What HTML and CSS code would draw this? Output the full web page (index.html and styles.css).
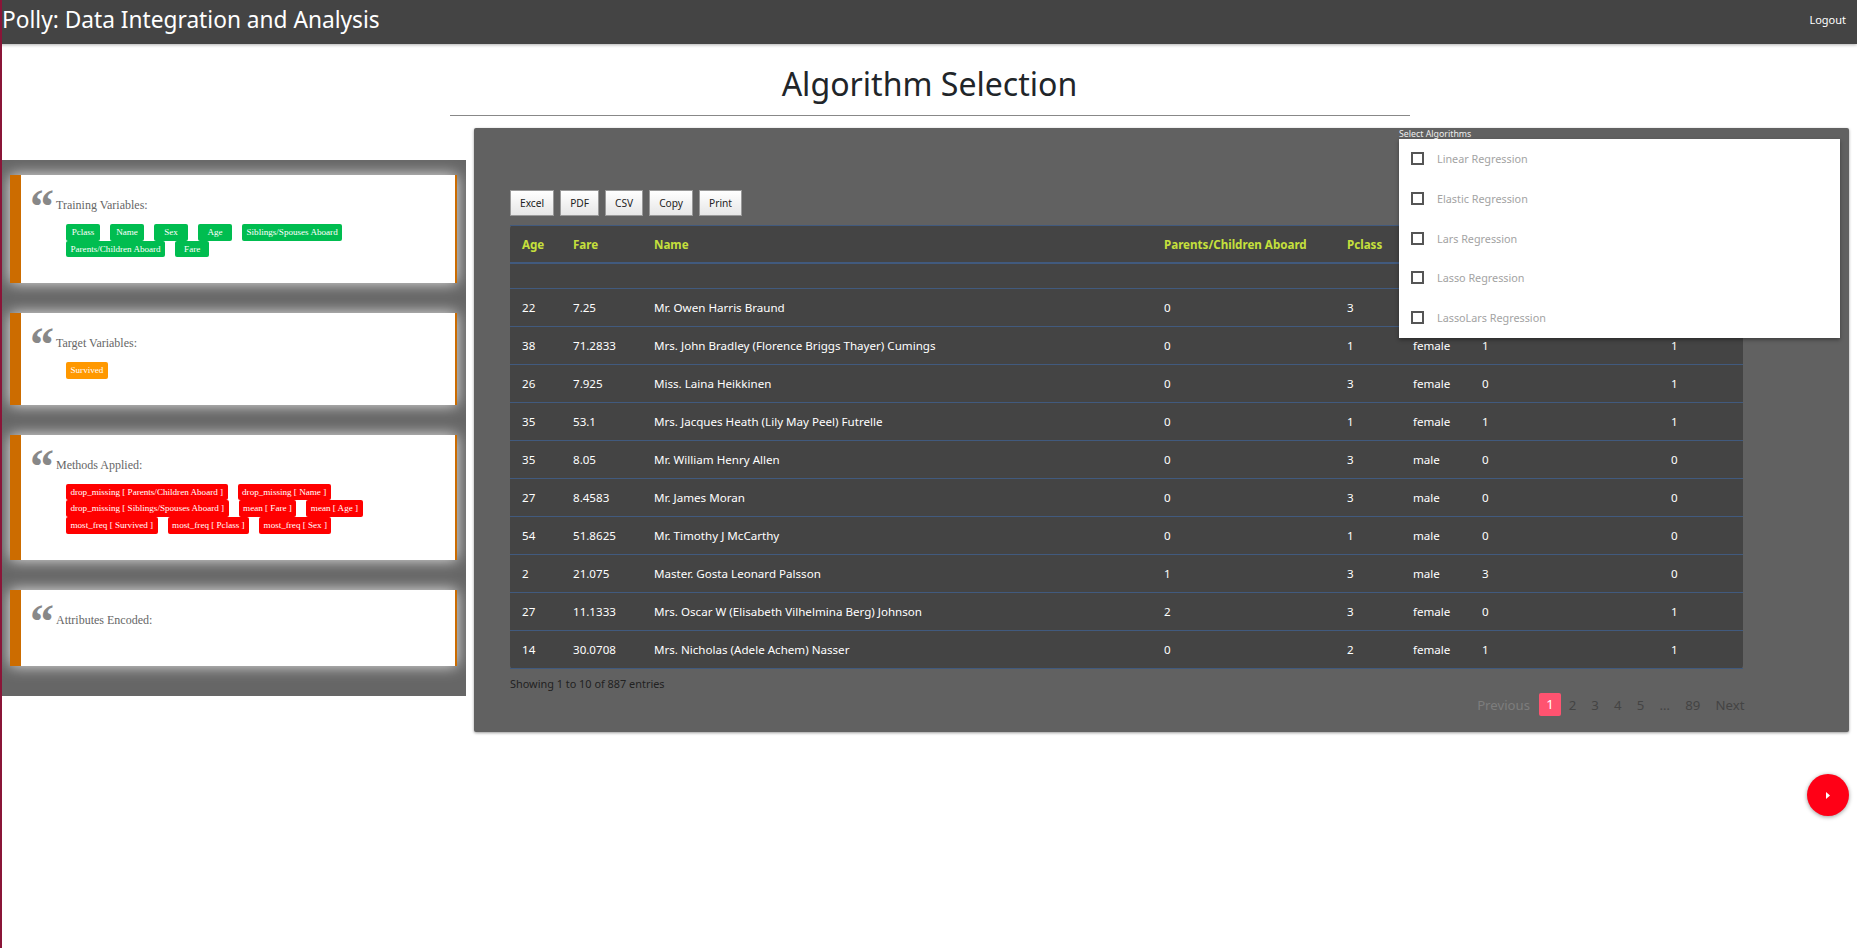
FILE: index.html
```html
<!DOCTYPE html>
<html>
<head>
    <meta charset="UTF-8">
    <title>Polly: Data Integration and Analysis</title>
    <link rel="stylesheet" href="styles.css">
</head>
<body>
    <header class="topbar">
        <span class="brand">Polly: Data Integration and Analysis</span>
        <a class="logout">Logout</a>
    </header>

    <div class="page-head">
        <h1>Algorithm Selection</h1>
        <div class="rule"></div>
    </div>

    <div class="main">
        <aside class="summary">
            <div class="card card-one">
                <div class="card-title"><span class="quote">“</span>Training Variables:</div>
                <div class="tags">
                    <span class="tag green">Pclass</span>
                    <span class="tag green">Name</span>
                    <span class="tag green">Sex</span>
                    <span class="tag green">Age</span>
                    <span class="tag green">Siblings/Spouses Aboard</span>
                    <span class="tag green">Parents/Children Aboard</span>
                    <span class="tag green">Fare</span>
                </div>
            </div>
            <div class="card">
                <div class="card-title"><span class="quote">“</span>Target Variables:</div>
                <div class="tags">
                    <span class="tag orange">Survived</span>
                </div>
            </div>
            <div class="card">
                <div class="card-title"><span class="quote">“</span>Methods Applied:</div>
                <div class="tags">
                    <span class="tag red">drop_missing [ Parents/Children Aboard ]</span>
                    <span class="tag red">drop_missing [ Name ]</span>
                    <span class="tag red">drop_missing [ Siblings/Spouses Aboard ]</span>
                    <span class="tag red">mean [ Fare ]</span>
                    <span class="tag red">mean [ Age ]</span>
                    <span class="tag red">most_freq [ Survived ]</span>
                    <span class="tag red">most_freq [ Pclass ]</span>
                    <span class="tag red">most_freq [ Sex ]</span>
                </div>
            </div>
            <div class="card">
                <div class="card-title"><span class="quote">“</span>Attributes Encoded:</div>
                <div class="tags"></div>
            </div>
        </aside>

        <div class="column">
            <section class="panel">
                <div class="algo-select">
                    <div class="algo-label">Select Algorithms</div>
                    <ul class="algo-list">
                        <li><span class="check"></span>Linear Regression</li>
                        <li><span class="check"></span>Elastic Regression</li>
                        <li><span class="check"></span>Lars Regression</li>
                        <li><span class="check"></span>Lasso Regression</li>
                        <li><span class="check"></span>LassoLars Regression</li>
                    </ul>
                </div>

                <div class="export-btns">
                    <button>Excel</button>
                    <button>PDF</button>
                    <button>CSV</button>
                    <button>Copy</button>
                    <button>Print</button>
                </div>

                <table class="data">
                    <colgroup>
                        <col class="c-age"><col class="c-fare"><col class="c-name"><col class="c-parents">
                        <col class="c-pclass"><col class="c-sex"><col class="c-sib"><col class="c-surv">
                    </colgroup>
                    <thead>
                        <tr>
                            <th>Age</th><th>Fare</th><th>Name</th><th>Parents/Children Aboard</th>
                            <th>Pclass</th><th></th><th></th><th></th>
                        </tr>
                    </thead>
                    <tbody>
                        <tr class="blank"><td colspan="8"></td></tr>
                        <tr><td>22</td><td>7.25</td><td>Mr. Owen Harris Braund</td><td>0</td><td>3</td><td></td><td></td><td></td></tr>
                        <tr><td>38</td><td>71.2833</td><td>Mrs. John Bradley (Florence Briggs Thayer) Cumings</td><td>0</td><td>1</td><td>female</td><td>1</td><td>1</td></tr>
                        <tr><td>26</td><td>7.925</td><td>Miss. Laina Heikkinen</td><td>0</td><td>3</td><td>female</td><td>0</td><td>1</td></tr>
                        <tr><td>35</td><td>53.1</td><td>Mrs. Jacques Heath (Lily May Peel) Futrelle</td><td>0</td><td>1</td><td>female</td><td>1</td><td>1</td></tr>
                        <tr><td>35</td><td>8.05</td><td>Mr. William Henry Allen</td><td>0</td><td>3</td><td>male</td><td>0</td><td>0</td></tr>
                        <tr><td>27</td><td>8.4583</td><td>Mr. James Moran</td><td>0</td><td>3</td><td>male</td><td>0</td><td>0</td></tr>
                        <tr><td>54</td><td>51.8625</td><td>Mr. Timothy J McCarthy</td><td>0</td><td>1</td><td>male</td><td>0</td><td>0</td></tr>
                        <tr><td>2</td><td>21.075</td><td>Master. Gosta Leonard Palsson</td><td>1</td><td>3</td><td>male</td><td>3</td><td>0</td></tr>
                        <tr><td>27</td><td>11.1333</td><td>Mrs. Oscar W (Elisabeth Vilhelmina Berg) Johnson</td><td>2</td><td>3</td><td>female</td><td>0</td><td>1</td></tr>
                        <tr><td>14</td><td>30.0708</td><td>Mrs. Nicholas (Adele Achem) Nasser</td><td>0</td><td>2</td><td>female</td><td>1</td><td>1</td></tr>
                    </tbody>
                </table>

                <div class="table-foot">
                    <div class="info">Showing 1 to 10 of 887 entries</div>
                    <div class="pager">
                        <span class="prev">Previous</span>
                        <span class="current">1</span>
                        <span>2</span><span>3</span><span>4</span><span>5</span>
                        <span class="dots">…</span>
                        <span>89</span>
                        <span>Next</span>
                    </div>
                </div>
            </section>

            <div class="fab-row">
                <button class="fab">
                    <svg width="4" height="7" viewBox="0 0 4 7"><path d="M0 0l4 3.5-4 3.5z" fill="#fff"/></svg>
                </button>
            </div>
        </div>
    </div>
</body>
</html>
```

FILE: styles.css
```css
* {
    box-sizing: border-box;
}
body {
    margin: 0;
    min-height: 100vh;
    background-color: #fff;
    border-left: 2px solid #8a1538;
    font-family: "Noto Sans", sans-serif;
}

.topbar {
    height: 44px;
    margin-left: -2px;
    padding: 0 11px 5px 2px;
    background-color: #444;
    color: #fff;
    display: flex;
    align-items: center;
    justify-content: space-between;
    box-shadow: 0 1px 3px rgba(0,0,0,0.3);
}
.brand {
    font-size: 22.7px;
}
.logout {
    font-size: 11px;
}

.page-head {
    height: 84px;
    padding-top: 15px;
}
h1 {
    margin: 0;
    font-size: 32.1px;
    font-weight: 400;
    line-height: 49px;
    text-align: center;
    color: #212529;
}
.rule {
    width: 960px;
    height: 1px;
    margin: 7px 0 0 448px;
    background-color: #888;
}

.main {
    display: flex;
    align-items: flex-start;
    gap: 8px;
}

/* left column */
.summary {
    width: 464px;
    margin-top: 32px;
    padding: 15px 9px 30px 8px;
    background-color: #666;
    display: flex;
    flex-direction: column;
    gap: 30px;
}
.card {
    padding: 0 0 26px 0;
    background-color: #fff;
    border-left: 11px solid #cc6c00;
    border-right: 2px solid #cc6c00;
    box-shadow: 0 0 14px rgba(255,255,255,0.85);
    font-family: "Liberation Serif", serif;
}
.card-title {
    height: 49px;
    padding: 23px 0 0 35px;
    position: relative;
    font-size: 12px;
    line-height: 14px;
    color: #666;
}
.quote {
    position: absolute;
    left: 9px;
    top: 8px;
    font-size: 48px;
    line-height: 48px;
    font-weight: bold;
    color: #888;
}
.tags {
    min-height: 1px;
    padding-left: 45px;
    width: 425px;
    display: flex;
    flex-wrap: wrap;
    column-gap: 10px;
}
.tag {
    min-width: 34px;
    height: 16.6px;
    padding: 0 4.5px;
    border-radius: 2px;
    font-size: 9.1px;
    line-height: 16px;
    text-align: center;
    color: #fff;
}
.green { background-color: #00bd50; }
.orange { background-color: #ff9800; }
.red { background-color: #f00; }

/* right column */
.column {
    width: 1375px;
}
.panel {
    position: relative;
    height: 604px;
    padding: 62px 106px 0 36px;
    background-color: #616161;
    border-radius: 2px;
    box-shadow: 0 1px 3px rgba(0,0,0,0.4);
}
.export-btns {
    display: flex;
    gap: 6px;
    margin-bottom: 9px;
}
.export-btns button {
    height: 26px;
    padding: 0 9px;
    border: 1px solid #999;
    background: linear-gradient(#fff, #e6e6e6);
    font-family: "Noto Sans", sans-serif;
    font-size: 10.2px;
    color: #222;
}

.data {
    width: 1233px;
    border-collapse: separate;
    border-spacing: 0;
    table-layout: fixed;
    background-color: #444;
    border-radius: 4px;
    font-size: 11.6px;
    color: #fff;
}
.c-age { width: 51px; }
.c-fare { width: 81px; }
.c-name { width: 510px; }
.c-parents { width: 183px; }
.c-pclass { width: 66px; }
.c-sex { width: 69px; }
.c-sib { width: 189px; }
.c-surv { width: 84px; }
.data th {
    height: 39px;
    padding: 0 0 0 12px;
    text-align: left;
    color: #c6e03c;
    font-weight: 700;
    border-top: 1px solid #415a7e;
    border-bottom: 2px solid #415a7e;
}
.data td {
    height: 38px;
    padding: 0 0 0 12px;
    border-bottom: 1px solid #415a7e;
}
.data .blank td {
    height: 25px;
}

.table-foot {
    position: relative;
}
.info {
    padding-top: 7px;
    font-size: 10.9px;
    color: #222;
}
.pager {
    position: absolute;
    top: 24px;
    right: -9px;
    display: flex;
    align-items: center;
    height: 23px;
    font-size: 13.2px;
    color: #444;
}
.pager span {
    padding: 0 7.6px;
}
.pager .prev {
    padding-right: 9px;
    color: #7d7d7d;
}
.pager .current {
    width: 22px;
    height: 23px;
    padding: 0;
    line-height: 23px;
    text-align: center;
    background-color: #ff5370;
    border-radius: 2px;
    color: #fff;
}

/* algorithm dropdown lies over the table */
.algo-select {
    position: absolute;
    left: 925px;
    top: 0;
    width: 441px;
}
.algo-label {
    height: 11px;
    font-size: 8.8px;
    line-height: 12px;
    color: #eee;
}
.algo-list {
    list-style: none;
    margin: 0;
    padding: 0 0 0.5px;
    background-color: #fff;
    box-shadow: 0 2px 4px rgba(0,0,0,0.35);
}
.algo-list li {
    height: 39.7px;
    padding-left: 12px;
    display: flex;
    align-items: center;
    font-size: 10.8px;
    color: #a3a3a3;
}
.check {
    width: 13px;
    height: 13px;
    margin-right: 13px;
    border: 2px solid #555;
}

.fab-row {
    display: flex;
    justify-content: flex-end;
    margin-top: 42px;
}
.fab {
    width: 42px;
    height: 42px;
    padding: 0;
    border: none;
    border-radius: 50%;
    background-color: #ff0016;
    box-shadow: 0 1px 4px rgba(0,0,0,0.4);
    display: flex;
    align-items: center;
    justify-content: center;
}
```
